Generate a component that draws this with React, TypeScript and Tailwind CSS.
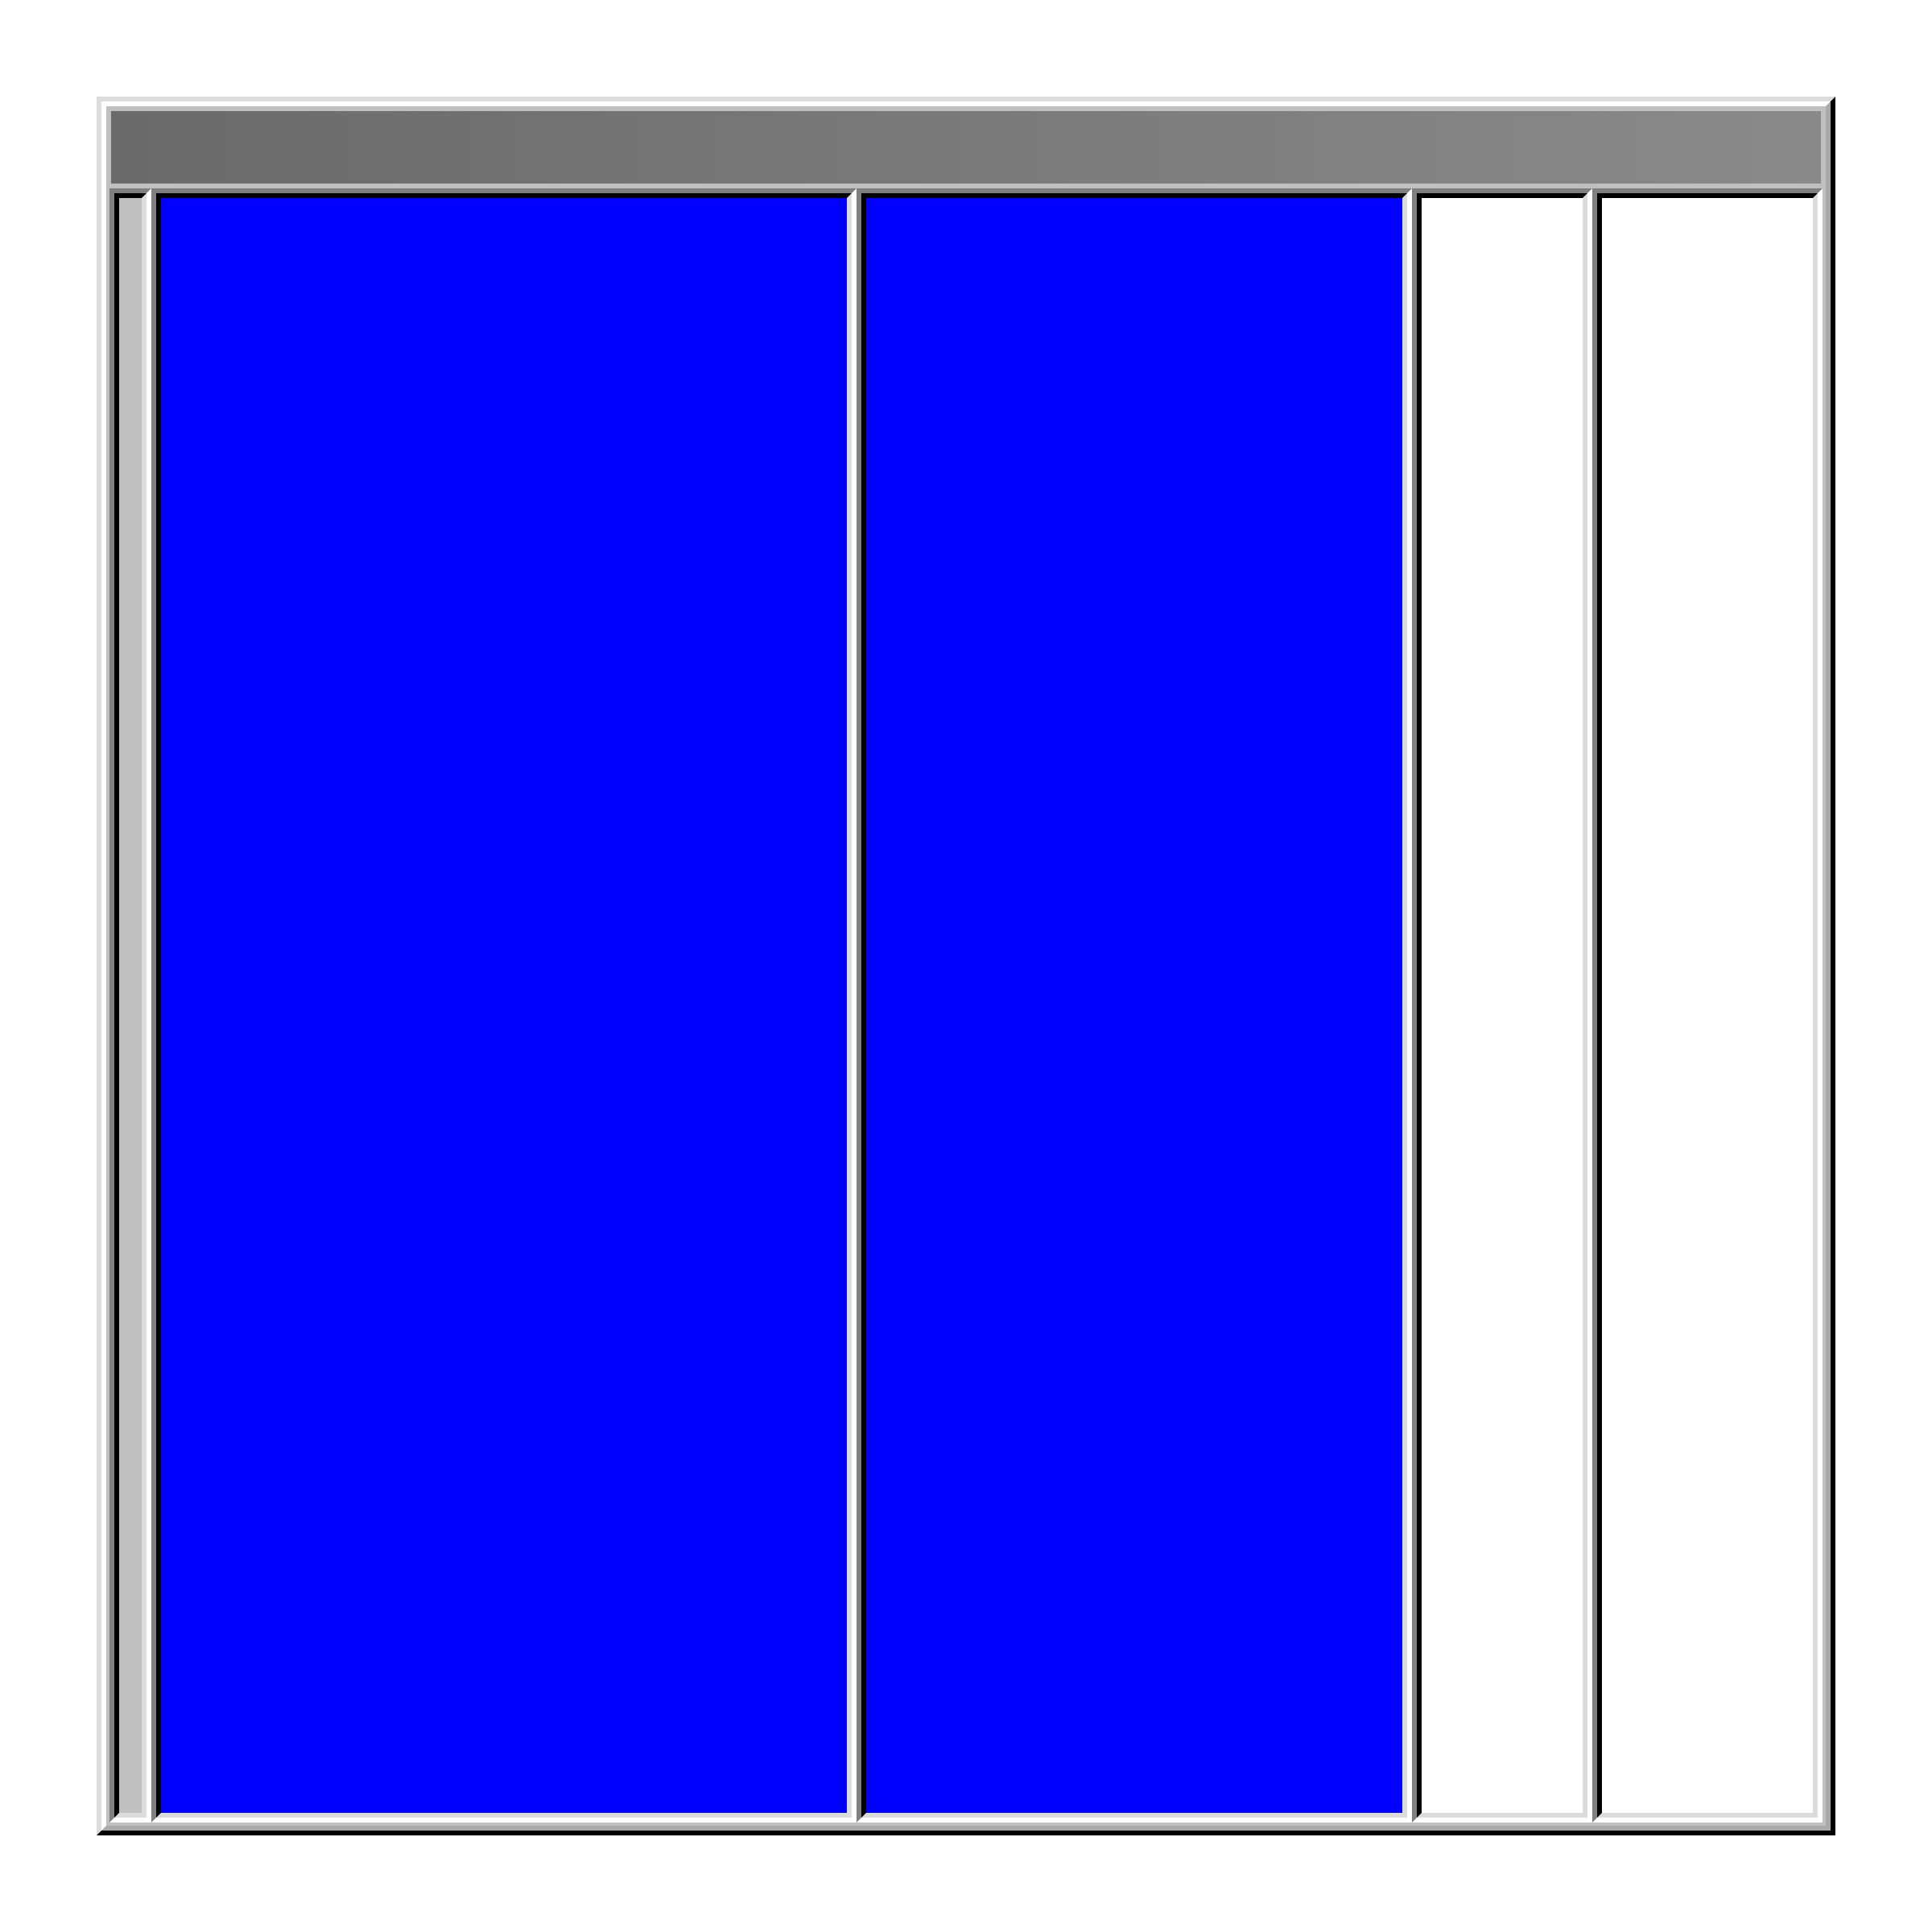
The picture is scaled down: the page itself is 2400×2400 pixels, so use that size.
// Tk-style window: raised outer frame, gradient title bar, row of sunken panes
function Pane({ className, fill }: { className: string; fill: string }) {
  return (
    <div className={`${className} h-full border-[6px] border-t-[#808080] border-l-[#808080] border-b-white border-r-white`}>
      <div className={`h-full w-full border-[6px] border-t-black border-l-black border-b-[#dcdcdc] border-r-[#dcdcdc] ${fill}`} />
    </div>
  )
}

export default function App() {
  return (
    <div className="w-[2400px] h-[2400px] bg-white p-[120px]">
      {/* Marco exterior en relieve */}
      <div className="w-[2160px] h-[2160px] border-[6px] border-t-[#dcdcdc] border-l-[#dcdcdc] border-b-black border-r-black">
        <div className="h-full w-full border-[6px] border-t-white border-l-white border-b-[#a9a9a9] border-r-[#a9a9a9] bg-[#c0c0c0] pt-[6px] px-[4px] pb-[4px] flex flex-col gap-[6px]">
          {/* Barra de título */}
          <div className="mx-[2px] h-[90px] shrink-0 bg-gradient-to-r from-[#6a6a6a] to-[#8a8a8a]" />

          {/* Paneles */}
          <div className="flex-1 flex">
            <Pane className="w-[52px]" fill="bg-[#c0c0c0]" />
            <Pane className="w-[876px]" fill="bg-[#0000ff]" />
            <Pane className="w-[690px]" fill="bg-[#0000ff]" />
            <Pane className="w-[224px]" fill="bg-white" />
            <Pane className="w-[286px]" fill="bg-white" />
          </div>
        </div>
      </div>
    </div>
  )
}
